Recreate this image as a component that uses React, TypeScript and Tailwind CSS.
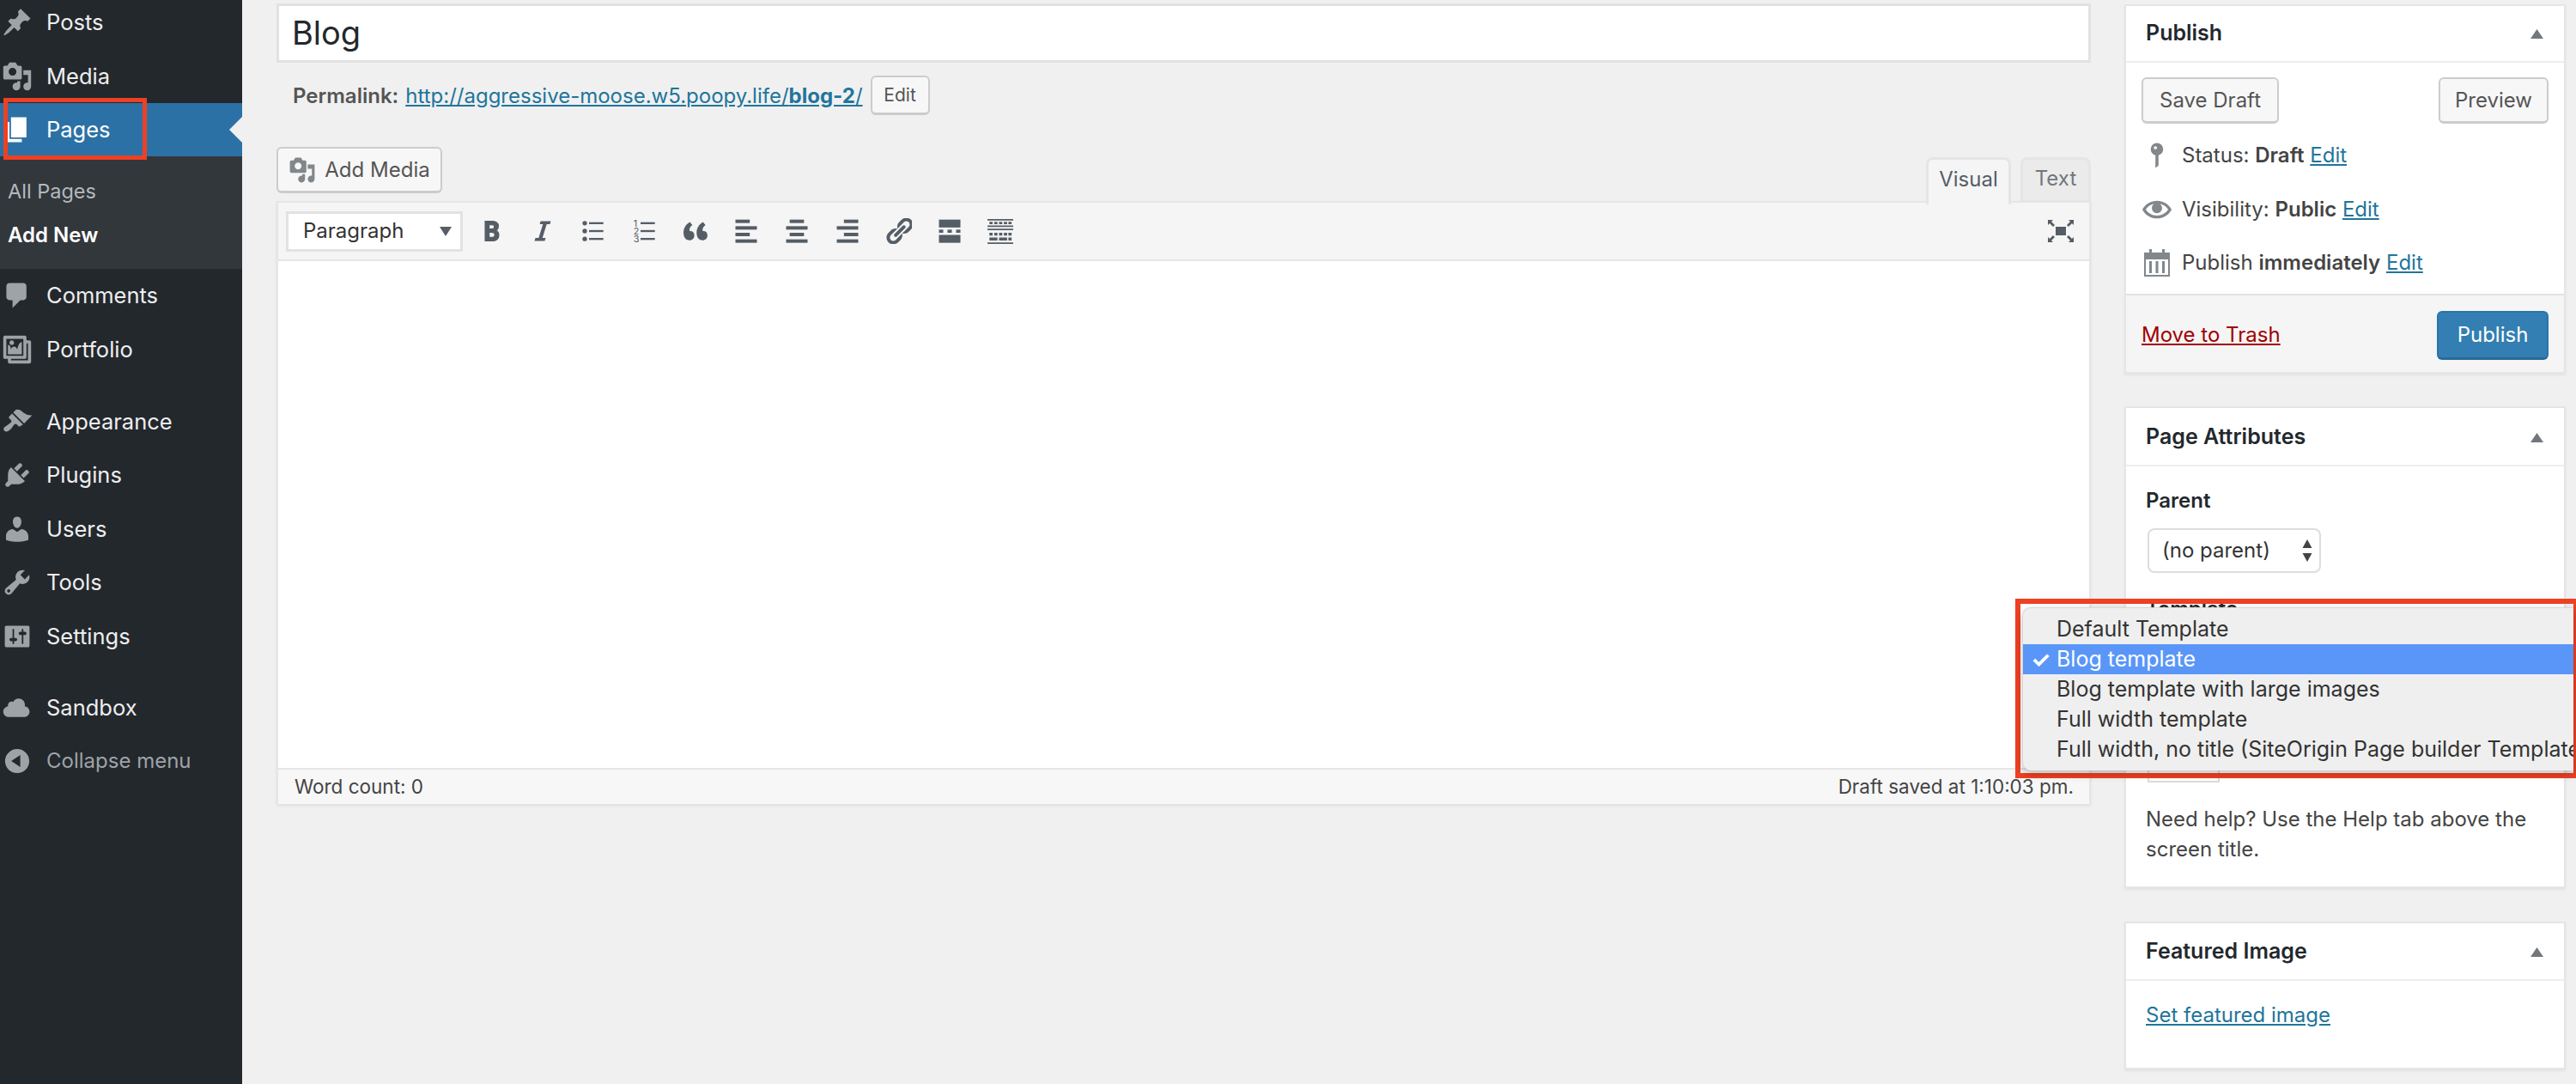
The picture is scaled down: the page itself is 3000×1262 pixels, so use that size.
import type { ReactNode } from "react";

const paths = {
  post: "M10.44 3.02l1.82-1.82 6.36 6.35-1.83 1.82c-1.05-.68-2.48-.57-3.41.36l-.75.75c-.92.93-1.04 2.35-.35 3.41l-1.83 1.82-2.41-2.41-2.8 2.79c-.42.42-3.38 2.71-3.8 2.29s1.86-3.39 2.28-3.81l2.79-2.79L4.1 9.36l1.83-1.82c1.05.69 2.48.57 3.4-.36l.75-.75c.93-.92 1.05-2.35.36-3.41z",
  media: "M13 11V4c0-.55-.45-1-1-1h-1.67L9 1H5L3.67 3H2c-.55 0-1 .45-1 1v7c0 .55.45 1 1 1h10c.55 0 1-.45 1-1zM7 4.5c1.38 0 2.5 1.12 2.5 2.5S8.38 9.5 7 9.5 4.5 8.38 4.5 7 5.62 4.5 7 4.5zM14 6h5v10.5c0 1.38-1.12 2.5-2.5 2.5S14 17.88 14 16.5s1.12-2.5 2.5-2.5c.17 0 .34.02.5.05V9h-3V6zm-4 8.05V13h2v3.5c0 1.38-1.12 2.5-2.5 2.5S7 17.88 7 16.5 8.12 14 9.5 14c.17 0 .34.02.5.05z",
  page: "M6 15V2h10v13H6zm-1 1h8v2H3V5h2v11z",
  comments: "M5 2h9c1.1 0 2 .9 2 2v7c0 1.1-.9 2-2 2h-2l-5 5v-5H5c-1.1 0-2-.9-2-2V4c0-1.1.9-2 2-2z",
  gallery: "M16 4h1.96c.57 0 1.04.47 1.04 1.04v12.92c0 .57-.47 1.04-1.04 1.04H5.04C4.47 19 4 18.53 4 17.96V16H2.04C1.47 16 1 15.53 1 14.96V2.04C1 1.47 1.47 1 2.04 1h12.92c.57 0 1.04.47 1.04 1.04V4zM3 14h11V3H3v11zm5-8.5C8 4.67 7.33 4 6.5 4S5 4.67 5 5.5 5.67 7 6.5 7 8 6.33 8 5.5zm2 4.5s1-5 3-5v8H4V7c2 0 2 3 2 3s.33-2 2-2 2 2 2 2zm7 7V6h-1v8.96c0 .57-.47 1.04-1.04 1.04H6v1h11z",
  appearance: "M14.48 11.06L7.41 3.99l1.5-1.5c.5-.56 2.3-.47 3.51.32 1.21.8 1.43 1.28 2.91 2.1 1.18.64 2.45 1.26 4.45.85zm-.71.71L6.7 4.7 4.93 6.47c-.39.39-.39 1.02 0 1.41l1.06 1.06c.39.39.39 1.03 0 1.42-.6.6-1.43 1.11-2.21 1.69-.35.26-.7.53-1.01.84C1.43 13.23.77 14.9 1.76 15.88c.98.99 2.65.33 3.99-1.01.31-.31.58-.66.84-1.01.58-.78 1.09-1.61 1.69-2.21.39-.39 1.03-.39 1.42 0l1.06 1.06c.39.39 1.02.39 1.41 0z",
  plugins: "M13.11 4.36L9.87 7.6 8 5.73l3.24-3.24c.35-.34 1.05-.2 1.56.32.52.51.66 1.21.31 1.55zm-8 1.77l.91-1.12 9.01 9.01-1.19.84c-.71.71-2.63 1.16-3.82 1.16H6.14L4.9 17.26c-.59.59-1.54.59-2.12 0-.59-.58-.59-1.53 0-2.12l1.24-1.24v-3.88c0-1.13.4-3.19 1.09-3.89zm7.26 3.97l3.24-3.24c.34-.35 1.04-.21 1.55.31.52.51.66 1.21.31 1.55l-3.24 3.25z",
  users: "M10 9.25c-2.27 0-2.73-3.44-2.73-3.44C7 4.02 7.82 2 9.97 2c2.16 0 2.98 2.02 2.71 3.81 0 0-.41 3.44-2.68 3.44zm0 2.57L12.72 10c2.39 0 4.52 2.33 4.52 4.53v2.49s-3.65 1.13-7.24 1.13c-3.65 0-7.24-1.13-7.24-1.13v-2.49c0-2.25 1.94-4.48 4.47-4.48z",
  tools: "M16.68 9.77c-1.34 1.34-3.3 1.67-4.95.99l-5.41 6.52c-.99.99-2.59.99-3.58 0s-.99-2.59 0-3.57l6.52-5.42c-.68-1.65-.35-3.61.99-4.95 1.28-1.28 3.12-1.62 4.72-1.06l-2.89 2.89 2.82 2.82 2.86-2.87c.53 1.58.18 3.39-1.08 4.65zM3.81 16.21c.4.39 1.04.39 1.43 0 .4-.4.4-1.04 0-1.43-.39-.4-1.03-.4-1.43 0-.39.39-.39 1.03 0 1.43z",
  settings: "M18 16V4c0-.55-.45-1-1-1H3c-.55 0-1 .45-1 1v12c0 .55.45 1 1 1h14c.55 0 1-.45 1-1zM8 11h1c.55 0 1 .45 1 1s-.45 1-1 1H8v1.5c0 .28-.22.5-.5.5s-.5-.22-.5-.5V13H6c-.55 0-1-.45-1-1s.45-1 1-1h1V5.5c0-.28.22-.5.5-.5s.5.22.5.5V11zm5-2h-1c-.55 0-1-.45-1-1s.45-1 1-1h1V5.5c0-.28.22-.5.5-.5s.5.22.5.5V7h1c.55 0 1 .45 1 1s-.45 1-1 1h-1v5.5c0 .28-.22.5-.5.5s-.5-.22-.5-.5V9z",
  cloud: "M14.9 9c1.8.2 3.1 1.7 3.1 3.5 0 1.9-1.6 3.5-3.5 3.5h-10C2.6 16 1 14.4 1 12.5 1 10.7 2.3 9.3 4.1 9 4 8.9 4 8.7 4 8.5 4 7.1 5.1 6 6.5 6c.3 0 .7.1.9.2C8.1 4.9 9.4 4 11 4c2.2 0 4 1.8 4 4 0 .4-.1.7-.1 1z",
  collapse: "M10 2.16c4.33 0 7.84 3.51 7.84 7.84s-3.51 7.84-7.84 7.84S2.16 14.33 2.16 10 5.71 2.16 10 2.16zm2 11.72V6.12L6.18 9.97z",
  pin: "M14 6c0 1.86-1.28 3.41-3 3.86V16c0 1-2 2-2 2V9.86c-1.72-.45-3-2-3-3.86 0-2.21 1.79-4 4-4s4 1.79 4 4zM8 5c0 .55.45 1 1 1s1-.45 1-1-.45-1-1-1-1 .45-1 1z",
  eye: "M19.7 9.4C17.7 6 14 3.9 10 3.9S2.3 6 .3 9.4L0 10l.3.6c2 3.4 5.7 5.5 9.7 5.5s7.7-2.1 9.7-5.5l.3-.6-.3-.6zM10 14.1c-3.1 0-6-1.6-7.7-4.1C3.6 8 5.7 6.6 8 6.1c-.9.6-1.5 1.7-1.5 2.9 0 1.9 1.6 3.5 3.5 3.5s3.5-1.6 3.5-3.5c0-1.2-.6-2.2-1.5-2.9 2.3.5 4.4 1.9 5.7 3.9-1.7 2.5-4.6 4.1-7.7 4.1z",
  bold: "M6 4v13h4.54c1.37 0 2.46-.33 3.26-1 .8-.66 1.2-1.58 1.2-2.77 0-.84-.17-1.51-.51-2.01s-.9-.85-1.67-1.03v-.09c.57-.1 1.02-.4 1.36-.9s.51-1.13.51-1.91c0-1.14-.39-1.98-1.17-2.5C12.75 4.26 11.5 4 9.78 4H6zm2.57 5.15V6.26h1.36c.73 0 1.27.11 1.61.32.34.22.51.58.51 1.07 0 .54-.16.92-.47 1.15s-.82.35-1.51.35h-1.5zm0 2.19h1.6c1.44 0 2.16.53 2.16 1.61 0 .6-.17 1.05-.51 1.34s-.86.43-1.57.43H8.57v-3.38z",
  italic: "M14.78 6h-2.13l-2.8 9h2.12l-.62 2H4.6l.62-2h2.14l2.8-9H8.03l.62-2h6.75z",
  link: "M17.74 2.76c1.68 1.69 1.68 4.41 0 6.1l-1.53 1.52c-1.12 1.12-2.7 1.47-4.14 1.09l2.62-2.61.76-.77.76-.76c.84-.84.84-2.2 0-3.04-.84-.85-2.2-.85-3.04 0l-.77.76-3.38 3.38c-.37-1.44-.02-3.02 1.1-4.14l1.52-1.53c1.69-1.68 4.42-1.68 6.1 0zM8.59 13.43l5.34-5.34c.42-.42.42-1.1 0-1.52-.44-.43-1.13-.39-1.53 0l-5.33 5.34c-.42.42-.42 1.1 0 1.52.44.43 1.13.39 1.52 0zm-.76 2.29l4.14-4.15c.38 1.44.03 3.02-1.09 4.14l-1.52 1.53c-1.69 1.68-4.41 1.68-6.1 0-1.68-1.68-1.68-4.42 0-6.1l1.53-1.52c1.12-1.12 2.7-1.47 4.14-1.1l-4.14 4.15c-.85.84-.85 2.2 0 3.05.84.84 2.2.84 3.04 0z",
};

function Dash({ d, className }: { d: string; className: string }) {
  return (
    <svg viewBox="0 0 20 20" fill="currentColor" className={className}>
      <path d={d} />
    </svg>
  );
}

function MenuRow({ icon, label, muted }: { icon: string; label: string; muted?: boolean }) {
  return (
    <div className="flex items-center h-[62.6px] pl-[2px]">
      <Dash d={icon} className="w-[36px] h-[36px] text-[#9ea3a8] shrink-0" />
      <span className={muted ? "ml-[16px] text-[24px] text-[#9ea3a8]" : "ml-[16px] text-[25.5px] text-[#eeeeee]"}>{label}</span>
    </div>
  );
}

function Sidebar() {
  return (
    <aside className="w-[282px] shrink-0 h-full bg-[#23282d] overflow-hidden">
      <div className="-mt-[5px]">
        <MenuRow icon={paths.post} label="Posts" />
        <MenuRow icon={paths.media} label="Media" />
        <div className="relative flex items-center h-[62px] pl-[2px] bg-[#2c71a6] text-white">
          <Dash d={paths.page} className="w-[36px] h-[36px] shrink-0" />
          <span className="ml-[16px] text-[25.5px]">Pages</span>
          <div className="absolute right-0 top-[16px] w-0 h-0 border-y-[15px] border-y-transparent border-r-[15px] border-r-[#f0f0f0]" />
        </div>
        <div className="h-[131px] bg-[#32373c] pl-[9px] pt-[15px] text-[24px]">
          <div className="h-[51px] leading-[51px] text-[23.5px] text-[#b4b9be]">All Pages</div>
          <div className="h-[51px] leading-[51px] text-white font-semibold">Add New</div>
        </div>
        <MenuRow icon={paths.comments} label="Comments" />
        <MenuRow icon={paths.gallery} label="Portfolio" />
        <div className="mt-[21px]">
          <MenuRow icon={paths.appearance} label="Appearance" />
          <MenuRow icon={paths.plugins} label="Plugins" />
          <MenuRow icon={paths.users} label="Users" />
          <MenuRow icon={paths.tools} label="Tools" />
          <MenuRow icon={paths.settings} label="Settings" />
        </div>
        <div className="mt-[20px]">
          <MenuRow icon={paths.cloud} label="Sandbox" />
          <MenuRow icon={paths.collapse} label="Collapse menu" muted />
        </div>
      </div>
    </aside>
  );
}

function Btn({ children, className }: { children: ReactNode; className: string }) {
  return (
    <div className={`flex items-center justify-center bg-[#f7f7f7] border-2 border-[#cccccc] border-b-[3px] rounded-[6px] text-[#555555] ${className}`}>
      {children}
    </div>
  );
}

function ToolIcon({ children, view = "1 1 18 18" }: { children: ReactNode; view?: string }) {
  return (
    <svg viewBox={view} fill="#555d66" className="w-[30px] h-[30px] shrink-0">
      {children}
    </svg>
  );
}

function Toolbar() {
  return (
    <div className="flex items-center h-[66px] box-content bg-[#f5f5f5] border-b-[2px] border-[#e5e5e5] pl-[9px] pr-[18px]">
      <div className="flex items-center justify-between w-[206px] h-[47px] bg-white border-[3px] border-[#e2e2e2] pl-[17px] pr-[10px] text-[24px] text-[#333333]">
        <span>Paragraph</span>
        <svg viewBox="0 0 14 14" className="w-[14px] h-[14px]" fill="#555d66">
          <path d="M0 2h14L7 13z" />
        </svg>
      </div>
      <div className="flex items-center gap-[29.2px] ml-[19px] flex-1">
        <ToolIcon view="2 2 17 17">
          <path d={paths.bold} stroke="#555d66" strokeWidth="0.7" />
        </ToolIcon>
        <ToolIcon view="1.5 2 17 17">
          <path d={paths.italic} />
        </ToolIcon>
        <ToolIcon>
          <circle cx="4" cy="4.5" r="1.6" />
          <circle cx="4" cy="10" r="1.6" />
          <circle cx="4" cy="15.5" r="1.6" />
          <rect x="7" y="3.8" width="10" height="1.4" />
          <rect x="7" y="9.3" width="10" height="1.4" />
          <rect x="7" y="14.8" width="10" height="1.4" />
        </ToolIcon>
        <ToolIcon>
          <text x="2" y="7" fontSize="6.5" fontFamily="Inter, sans-serif">1</text>
          <text x="2" y="12.5" fontSize="6.5" fontFamily="Inter, sans-serif">2</text>
          <text x="2" y="18" fontSize="6.5" fontFamily="Inter, sans-serif">3</text>
          <rect x="7" y="3.8" width="10" height="1.4" />
          <rect x="7" y="9.3" width="10" height="1.4" />
          <rect x="7" y="14.8" width="10" height="1.4" />
        </ToolIcon>
        <ToolIcon view="1.6 2.2 16.7 16.7">
          <path d="M9.2 13.3c0-1.9-1.4-3-3.1-2.7-.3-1.6.3-2.8 1.8-3.9L6.3 4.700C3.4 6.400 2 9 2.200 12.200c.2 2.900 1.800 4.300 3.800 4.300 1.900 0 3.200-1.300 3.200-3.200z" />
          <path d="M17.7 13.3c0-1.9-1.4-3-3.1-2.7-.3-1.6.3-2.8 1.8-3.9l-1.6-2c-2.9 1.7-4.3 4.300-4.100 7.500.2 2.900 1.800 4.300 3.800 4.300 1.900 0 3.200-1.300 3.200-3.200z" />
        </ToolIcon>
        <ToolIcon>
          <rect x="2.5" y="2" width="10" height="2.4" />
          <rect x="2.5" y="6.6" width="15" height="2.4" />
          <rect x="2.5" y="11.2" width="10" height="2.4" />
          <rect x="2.5" y="15.8" width="15" height="2.4" />
        </ToolIcon>
        <ToolIcon>
          <rect x="5" y="2" width="10" height="2.4" />
          <rect x="2.5" y="6.6" width="15" height="2.4" />
          <rect x="5" y="11.2" width="10" height="2.4" />
          <rect x="2.5" y="15.8" width="15" height="2.4" />
        </ToolIcon>
        <ToolIcon>
          <rect x="7.5" y="2" width="10" height="2.4" />
          <rect x="2.5" y="6.6" width="15" height="2.4" />
          <rect x="7.5" y="11.2" width="10" height="2.4" />
          <rect x="2.5" y="15.8" width="15" height="2.4" />
        </ToolIcon>
        <ToolIcon view="1.75 1.75 16.5 16.5">
          <path d={paths.link} />
        </ToolIcon>
        <ToolIcon>
          <rect x="2.5" y="2" width="15" height="5.5" />
          <rect x="2.5" y="9" width="3" height="2.2" />
          <rect x="8.5" y="9" width="3" height="2.2" />
          <rect x="14.5" y="9" width="3" height="2.2" />
          <rect x="2.5" y="12.7" width="15" height="5.5" />
        </ToolIcon>
        <ToolIcon view="2 2 16 16">
          <path fillRule="evenodd" d="M1 2.500h18v5H1zM2 3.500v3h16v-3zM1 8.500h18V18H1zM2 9.500V17h16V9.500z" />
          <path d="M3.200 4.300h2v1.400h-2zM6.200 4.300h2v1.400h-2zM9.200 4.300h2v1.400h-2zM12.200 4.300h2v1.400h-2zM15 4.300h2v1.400h-2zM3.200 11h2v1.800h-2zM6.200 11h2v1.800h-2zM9.200 11h2v1.800h-2zM12.200 11h2v1.800h-2zM15 11h2v1.800h-2zM3.200 14h5v1.800h-5zM9.200 14h5v1.800h-5zM15 14h2v1.800h-2z" />
        </ToolIcon>
        <div className="flex-1" />
        <svg viewBox="0 0 30 26" fill="#555d66" className="w-[30px] h-[26px] shrink-0">
          <rect x="9" y="8" width="12" height="10" />
          <path d="M0 0h6L4 2l4 4-2 2-4-4-2 2zM30 0h-6l2 2-4 4 2 2 4-4 2 2zM0 26h6l-2-2 4-4-2-2-4 4-2-2zM30 26h-6l2-2-4-4 2-2 4 4 2-2z" />
        </svg>
      </div>
    </div>
  );
}

function EditorColumn() {
  return (
    <div className="w-[2113px] shrink-0 pt-[4px]">
      <div className="h-[69px] bg-white border-[3px] border-[#e2e2e2] flex items-center pl-[15px] text-[38px] text-[#23282d]">Blog</div>
      <div className="flex items-center h-[46px] mt-[15px] pl-[19px] text-[24px] text-[#555555]">
        <span className="font-semibold pt-[2px]">Permalink:</span>
        <span className="ml-[8px] pt-[2px] text-[#21759b] underline">
          http://aggressive-moose.w5.poopy.life/<span className="font-bold">blog-2</span>/
        </span>
        <Btn className="ml-[9px] w-[69px] h-[46px] text-[21px]">Edit</Btn>
      </div>
      <div className="flex justify-between h-[65px] mt-[37px]">
        <Btn className="w-[193px] h-[54px] text-[24px] gap-[10px]">
          <Dash d={paths.media} className="w-[32px] h-[32px] text-[#82878c]" />
          Add Media
        </Btn>
        <div className="flex items-start gap-[11px] mt-[12px] text-[24px] relative z-10">
          <div className="w-[99px] h-[55px] pb-[6px] flex items-center justify-center bg-[#f5f5f5] border-[3px] border-b-0 border-[#e5e5e5] rounded-t-[8px] text-[#555d66]">Visual</div>
          <div className="w-[82px] h-[53px] pb-[4px] flex items-center justify-center bg-[#ebebeb] border-[3px] border-[#e5e5e5] rounded-t-[8px] text-[#72777c]">Text</div>
        </div>
      </div>
      <div className="-mt-[2px] h-[702px] flex flex-col border-x-[2px] border-t-[2px] border-[#e5e5e5] shadow-[0_2px_3px_rgba(0,0,0,0.08)]">
        <Toolbar />
        <div className="flex-1 bg-white" />
        <div className="flex items-center justify-between h-[42px] bg-[#f7f7f7] border-t-[2px] border-[#e5e5e5] pl-[19px] pr-[18px] text-[22.5px] text-[#444444]">
          <span>Word count: 0</span>
          <span>Draft saved at 1:10:03 pm.</span>
        </div>
      </div>
    </div>
  );
}

function Card({ title, children, className }: { title: string; children: ReactNode; className: string }) {
  return (
    <section className={`bg-white border-[2px] border-[#e5e5e5] shadow-[0_2px_3px_rgba(0,0,0,0.06)] flex flex-col ${className}`}>
      <div className="flex items-center justify-between h-[64px] shrink-0 border-b-[2px] border-[#eeeeee] box-content pl-[23px] pr-[24px]">
        <span className="text-[25px] font-semibold text-[#23282d]">{title}</span>
        <svg viewBox="0 0 15 11" className="w-[15px] h-[11px]" fill="#72777c">
          <path d="M7.5 0L15 11H0z" />
        </svg>
      </div>
      {children}
    </section>
  );
}

function StatusRow({ icon, label, value }: { icon: ReactNode; label: string; value: string }) {
  return (
    <div className="flex items-center h-[62.5px]">
      <div className="w-[47px] flex justify-center shrink-0">{icon}</div>
      <span className="ml-[6px]">
        {label} <span className="font-semibold">{value}</span>{" "}
        <span className="text-[#21759b] underline">Edit</span>
      </span>
    </div>
  );
}

function PublishBox() {
  return (
    <Card title="Publish" className="h-[430px]">
      <div className="flex-1 pt-[17px] px-[18px] text-[24px] text-[#444444]">
        <div className="flex justify-between">
          <Btn className="w-[160px] h-[54px]">Save Draft</Btn>
          <Btn className="w-[128px] h-[54px]">Preview</Btn>
        </div>
        <div className="mt-[6px] -ml-[6px]">
          <StatusRow icon={<Dash d={paths.pin} className="w-[36px] h-[36px] text-[#82878c]" />} label="Status:" value="Draft" />
          <StatusRow icon={<Dash d={paths.eye} className="w-[34px] h-[34px] text-[#82878c]" />} label="Visibility:" value="Public" />
          <StatusRow
            icon={
              <svg viewBox="0 0 30 32" fill="none" className="w-[30px] h-[32px] text-[#82878c]">
                <path fill="currentColor" fillRule="evenodd" d="M0 4h6V0h3v4h12V0h3v4h6v28H0zM2 12v18h26V12z" />
                <path fill="currentColor" d="M6 14h3v14H6zM13.5 14h3v14h-3zM21 14h3v14h-3z" />
              </svg>
            }
            label="Publish"
            value="immediately"
          />
        </div>
      </div>
      <div className="flex items-center justify-between h-[91px] shrink-0 bg-[#f5f5f5] border-t-[2px] border-[#e2e2e2] pt-[3px] px-[18px] text-[24px]">
        <span className="text-[#a00000] underline">Move to Trash</span>
        <div className="flex items-center justify-center w-[130px] h-[57px] bg-[#337fb3] border-2 border-[#2a75a8] border-b-[3px] border-b-[#2a6a99] rounded-[6px] text-white">Publish</div>
      </div>
    </Card>
  );
}

function AttributesBox() {
  return (
    <Card title="Page Attributes" className="mt-[38px] h-[561px] pt-[2px]">
      <div className="px-[23px] pt-[22px] text-[24px] text-[#444444]">
        <div className="h-[36px] leading-[36px] font-semibold text-[#23282d]">Parent</div>
        <div className="flex items-center justify-between w-[202px] h-[52px] mt-[14px] ml-[2px] border-[2px] border-[#dddddd] rounded-[8px] pl-[15px] pr-[8px] text-[#333333]">
          <span>(no parent)</span>
          <svg viewBox="0 0 12 26" className="w-[12px] h-[26px]" fill="#444444">
            <path d="M6 0l5.5 10H.5zM6 26l5.500-10H.5z" />
          </svg>
        </div>
        <div className="h-[36px] leading-[36px] mt-[24px] font-semibold text-[#23282d]">Template</div>
        <div className="w-[84px] h-[52px] mt-[132px] ml-[2px] flex items-center pl-[13px] pt-[4px] border-[2px] border-[#dddddd] text-[#333333]">0</div>
        <p className="mt-[25px] leading-[35px]">Need help? Use the Help tab above the screen title.</p>
      </div>
    </Card>
  );
}

function FeaturedBox() {
  return (
    <Card title="Featured Image" className="mt-[39px] h-[172px] pt-[1px]">
      <div className="pl-[23px] pt-[22px] text-[24px] text-[#21759b] underline">Set featured image</div>
    </Card>
  );
}

function TemplateMenu() {
  const items = ["Default Template", "Blog template", "Blog template with large images", "Full width template", "Full width, no title (SiteOrigin Page builder Template)"];
  return (
    <div className="absolute left-[2347px] top-[697px] w-[653px] h-[209px] border-[6px] border-r-[3px] border-[#ee4023] pl-[2px] pt-[4px] pb-[3px] z-20">
      <div className="h-full bg-[#efefef] rounded-l-[10px] border-l border-t border-[#d8d8d8] pt-[7px] overflow-hidden shadow-[0_4px_10px_rgba(0,0,0,0.25)] text-[25px] text-[#333333]">
        {items.map((item) => (
          <div key={item} className={item === "Blog template" ? "flex items-center h-[35px] bg-[#5a96f8] text-white whitespace-nowrap" : "flex items-center h-[35px] whitespace-nowrap"}>
            <span className="w-[39px] shrink-0 pl-[9px] text-[26px] font-bold">{item === "Blog template" ? "✓" : ""}</span>
            {item}
          </div>
        ))}
      </div>
    </div>
  );
}

export default function App() {
  return (
    <div className="relative flex w-[3000px] h-[1262px] overflow-hidden bg-[#f0f0f0] font-['Inter',sans-serif]">
      <Sidebar />
      <main className="flex flex-1 pl-[40px]">
        <EditorColumn />
        <div className="w-[514px] ml-[39px] pt-[5px] shrink-0">
          <PublishBox />
          <AttributesBox />
          <FeaturedBox />
        </div>
      </main>
      {/* red highlight boxes drawn over the screen */}
      <div className="absolute left-[4px] top-[114px] w-[167px] h-[72px] border-[5px] border-[#ee4023] z-20" />
      <TemplateMenu />
    </div>
  );
}
